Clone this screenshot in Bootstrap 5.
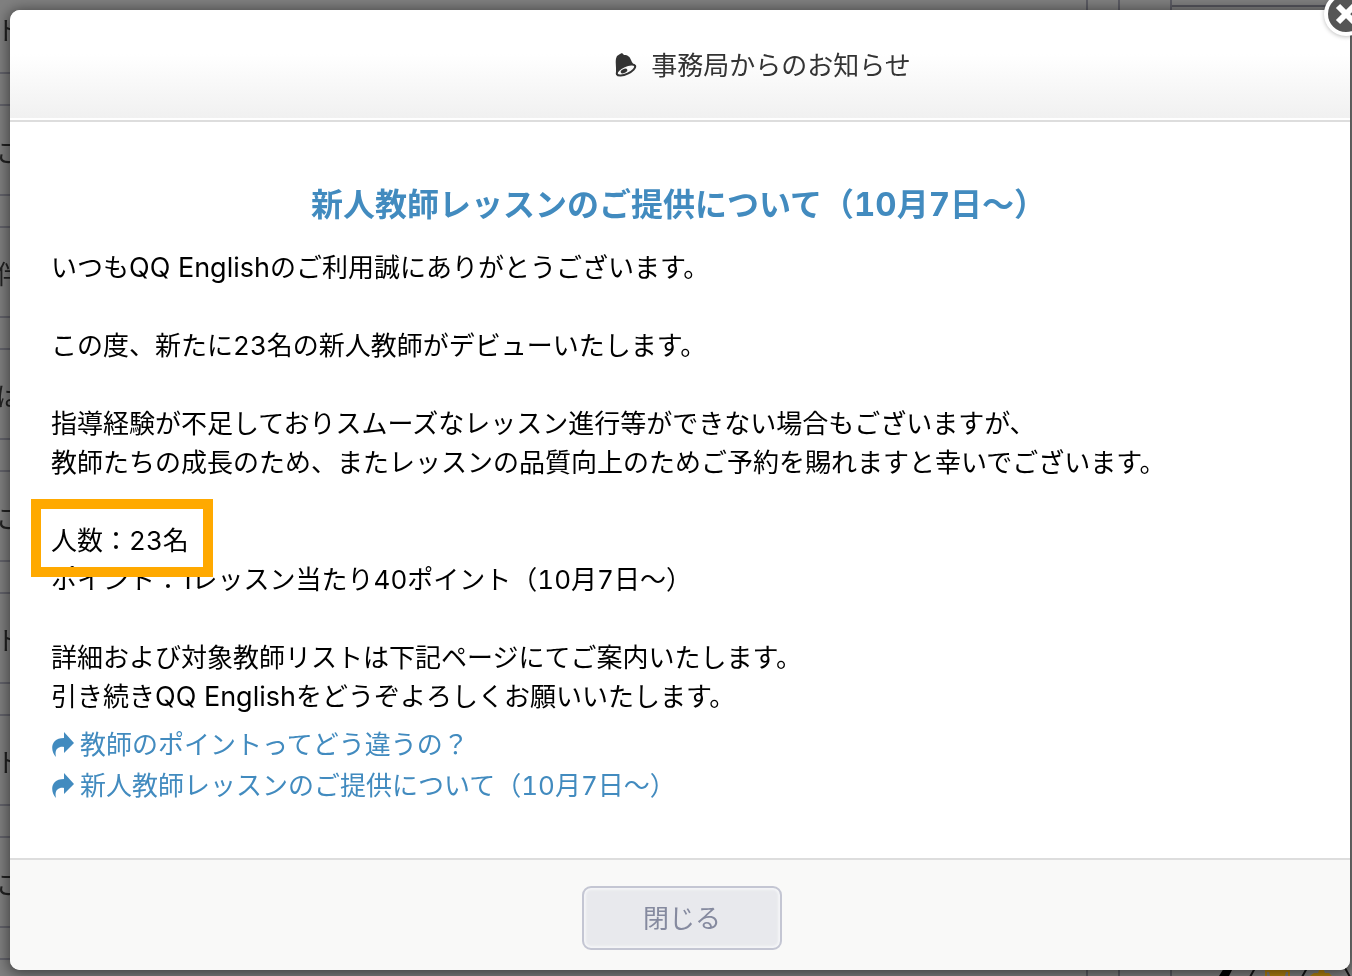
<!DOCTYPE html>
<html lang="ja">
<head>
<meta charset="utf-8">
<meta name="viewport" content="width=device-width, initial-scale=1">
<title>事務局からのお知らせ</title>
<link rel="stylesheet" href="https://cdn.jsdelivr.net/npm/bootstrap@5.3.0/dist/css/bootstrap.min.css">
<style>
body{font-family:Inter,"Noto Sans CJK JP",sans-serif;font-size:26px;line-height:39px;color:#000;background:#808080;overflow:hidden}
/* dimmed page behind the dialog */
.backpage{position:fixed;inset:0;overflow:hidden;color:#222}
.names{flex:1;margin-top:-18px}
.name-row{height:92px;margin-bottom:30px;padding-top:4px;border-top:2px solid #63636b;border-bottom:2px solid #63636b;display:flex;align-items:center;margin-left:-4px}
.side{width:266px;border-left:2px solid #5c5c64}
.gutter{width:32px;border-right:2px solid #5c5c64;margin-right:50px}
.panel{width:182px;border-left:2px solid #5c5c64;padding-top:5px}
.panel-line{border-top:2px solid #55555d}
.modal{padding:10px 2px 6px 10px;overflow:hidden}
.modal-content{border:0;border-radius:10px;box-shadow:0 2px 14px 2px rgba(0,0,0,.5);color:#000}
.modal-header{height:112px;padding:2px 0 2px 166px;border-bottom:2px solid #ddd;border-radius:10px 10px 0 0;background:linear-gradient(#fff 40%,#f0f0f0 100%);box-shadow:inset 0 -2px #fff}
.modal-title{font-size:26px;line-height:39px;font-weight:400;color:#333;gap:12px}
.modal-body{padding:58px 40px 52px 41px}
.notice-title{font-size:32px;line-height:48px;font-weight:700;color:#428bbf;margin:0 0 19px;padding-right:4px}
.notice-text p{margin:0 0 39px}
.latin{font-size:27px;line-height:1}
.num{font-variant-numeric:tabular-nums}
.notice-title .num{font-size:33px}
.marked{position:relative;z-index:1}
.marked::after{content:"";position:absolute;inset:-26px -24px -21px -20px;border:10px solid #ffa900}
.links a{color:#428bbf;text-decoration:none;gap:5px;line-height:41px}
.modal-footer{height:112px;border-top:2px solid #ddd;background:#f9f9f8;border-radius:0 0 10px 10px;padding:0 0 0 4px}
.btn-shut{width:200px;height:64px;margin:6px 0 0;font-size:26px;color:#858a9f;background:#e8e9ed;border:2px solid #c4c6d3;border-radius:9px;box-shadow:inset 0 0 2px 2px #f4f5f7}
.btn-shut:hover{color:#858a9f;background:#e2e3e9;border-color:#c4c6d3}
.closer{position:absolute;top:-18px;right:-18px;width:44px;height:44px;padding:0;border:4px solid #fff;border-radius:50%;background:#555;box-shadow:0 1px 4px rgba(0,0,0,.25);z-index:2}
</style>
</head>
<body>
<div class="backpage d-flex" aria-hidden="true">
  <div class="names">
    <div class="name-row">ト</div><div class="name-row">ご</div><div class="name-row">伴</div><div class="name-row">は</div>
    <div class="name-row">ご</div><div class="name-row">ト</div><div class="name-row">ト</div><div class="name-row">ご</div>
    <div class="name-row"></div>
  </div>
  <div class="side d-flex">
    <div class="gutter"></div>
    <div class="panel flex-fill d-flex flex-column">
      <div class="panel-line"></div>
      <svg class="mt-auto ms-auto" width="134" height="8" viewBox="0 0 134 8">
        <path d="M1 8 6 0h9l-4 8z" fill="#000"/><path d="m32 9 5-9M84 9l5-9m38 0 5 9" stroke="#151515" stroke-width="2"/>
        <path d="M51 0h17v2h4v6h-2V4h-2l-1 4H52l-1-4h-2v4h-2V2h4zM92 8l4-3h4l2-5h3l2 5h4l3 3z" fill="#b58410"/>
      </svg>
    </div>
  </div>
</div>

<div class="modal d-block" role="dialog" aria-labelledby="dialog-title">
  <div class="modal-dialog mw-100 m-0">
    <div class="modal-content">
      <button type="button" class="closer btn" aria-label="閉じる">
        <svg class="d-block" width="36" height="36" viewBox="0 0 36 36"><path d="m10 10 16 16m0-16L10 26" stroke="#fff" stroke-width="6"/></svg>
      </button>
      <div class="modal-header justify-content-center">
        <h1 class="modal-title d-flex align-items-center" id="dialog-title">
          <svg width="24" height="26" viewBox="0 0 24 26"><path d="M2 4c1-1 2-1 3-2l2-1 2 2c4 0 6 2 7 5 1 3 3 5 5 6L1 23V16C1 11 0 8 2 4z" fill="#333"/><ellipse cx="11" cy="18" rx="10" ry="4" transform="rotate(-25 11 18)" fill="#fafafa" stroke="#333" stroke-width="2"/><ellipse cx="9" cy="19" rx="3.5" ry="2" transform="rotate(-25 9 19)" fill="#333"/></svg>
          <span>事務局からのお知らせ</span>
        </h1>
      </div>
      <div class="modal-body">
        <h2 class="notice-title text-center">新人教師レッスンのご提供について（<span class="num">10</span>月<span class="num">7</span>日〜）</h2>
        <div class="notice-text">
          <p>いつも<span class="latin">QQ English</span>のご利用誠にありがとうございます。</p>
          <p>この度、新たに<span class="num">23</span>名の新人教師がデビューいたします。</p>
          <p>指導経験が不足しておりスムーズなレッスン進行等ができない場合もございますが、<br>教師たちの成長のため、またレッスンの品質向上のためご予約を賜れますと幸いでございます。</p>
          <p><span class="marked">人数：<span class="num">23</span>名</span><br>ポイント：1レッスン当たり<span class="num">40</span>ポイント（<span class="num">10</span>月<span class="num">7</span>日〜）</p>
          <p class="mb-2">詳細および対象教師リストは下記ページにてご案内いたします。<br>引き続き<span class="latin">QQ English</span>をどうぞよろしくお願いいたします。</p>
        </div>
        <div class="links d-flex flex-column align-items-start">
          <a href="#" class="d-flex align-items-center"><svg width="24" height="26" viewBox="0 0 24 26"><path d="M13 0l10 11-10 10v-6C8 14 3 17 5 25-1 19-1 6 13 6z" fill="#428bbf"/></svg><span>教師のポイントってどう違うの？</span></a>
          <a href="#" class="d-flex align-items-center"><svg width="24" height="26" viewBox="0 0 24 26"><path d="M13 0l10 11-10 10v-6C8 14 3 17 5 25-1 19-1 6 13 6z" fill="#428bbf"/></svg><span>新人教師レッスンのご提供について（<span class="num">10</span>月<span class="num">7</span>日〜）</span></a>
        </div>
      </div>
      <div class="modal-footer justify-content-center"><button type="button" class="btn btn-shut">閉じる</button></div>
    </div>
  </div>
</div>
<script src="https://cdn.jsdelivr.net/npm/bootstrap@5.3.0/dist/js/bootstrap.bundle.min.js"></script>
</body>
</html>
